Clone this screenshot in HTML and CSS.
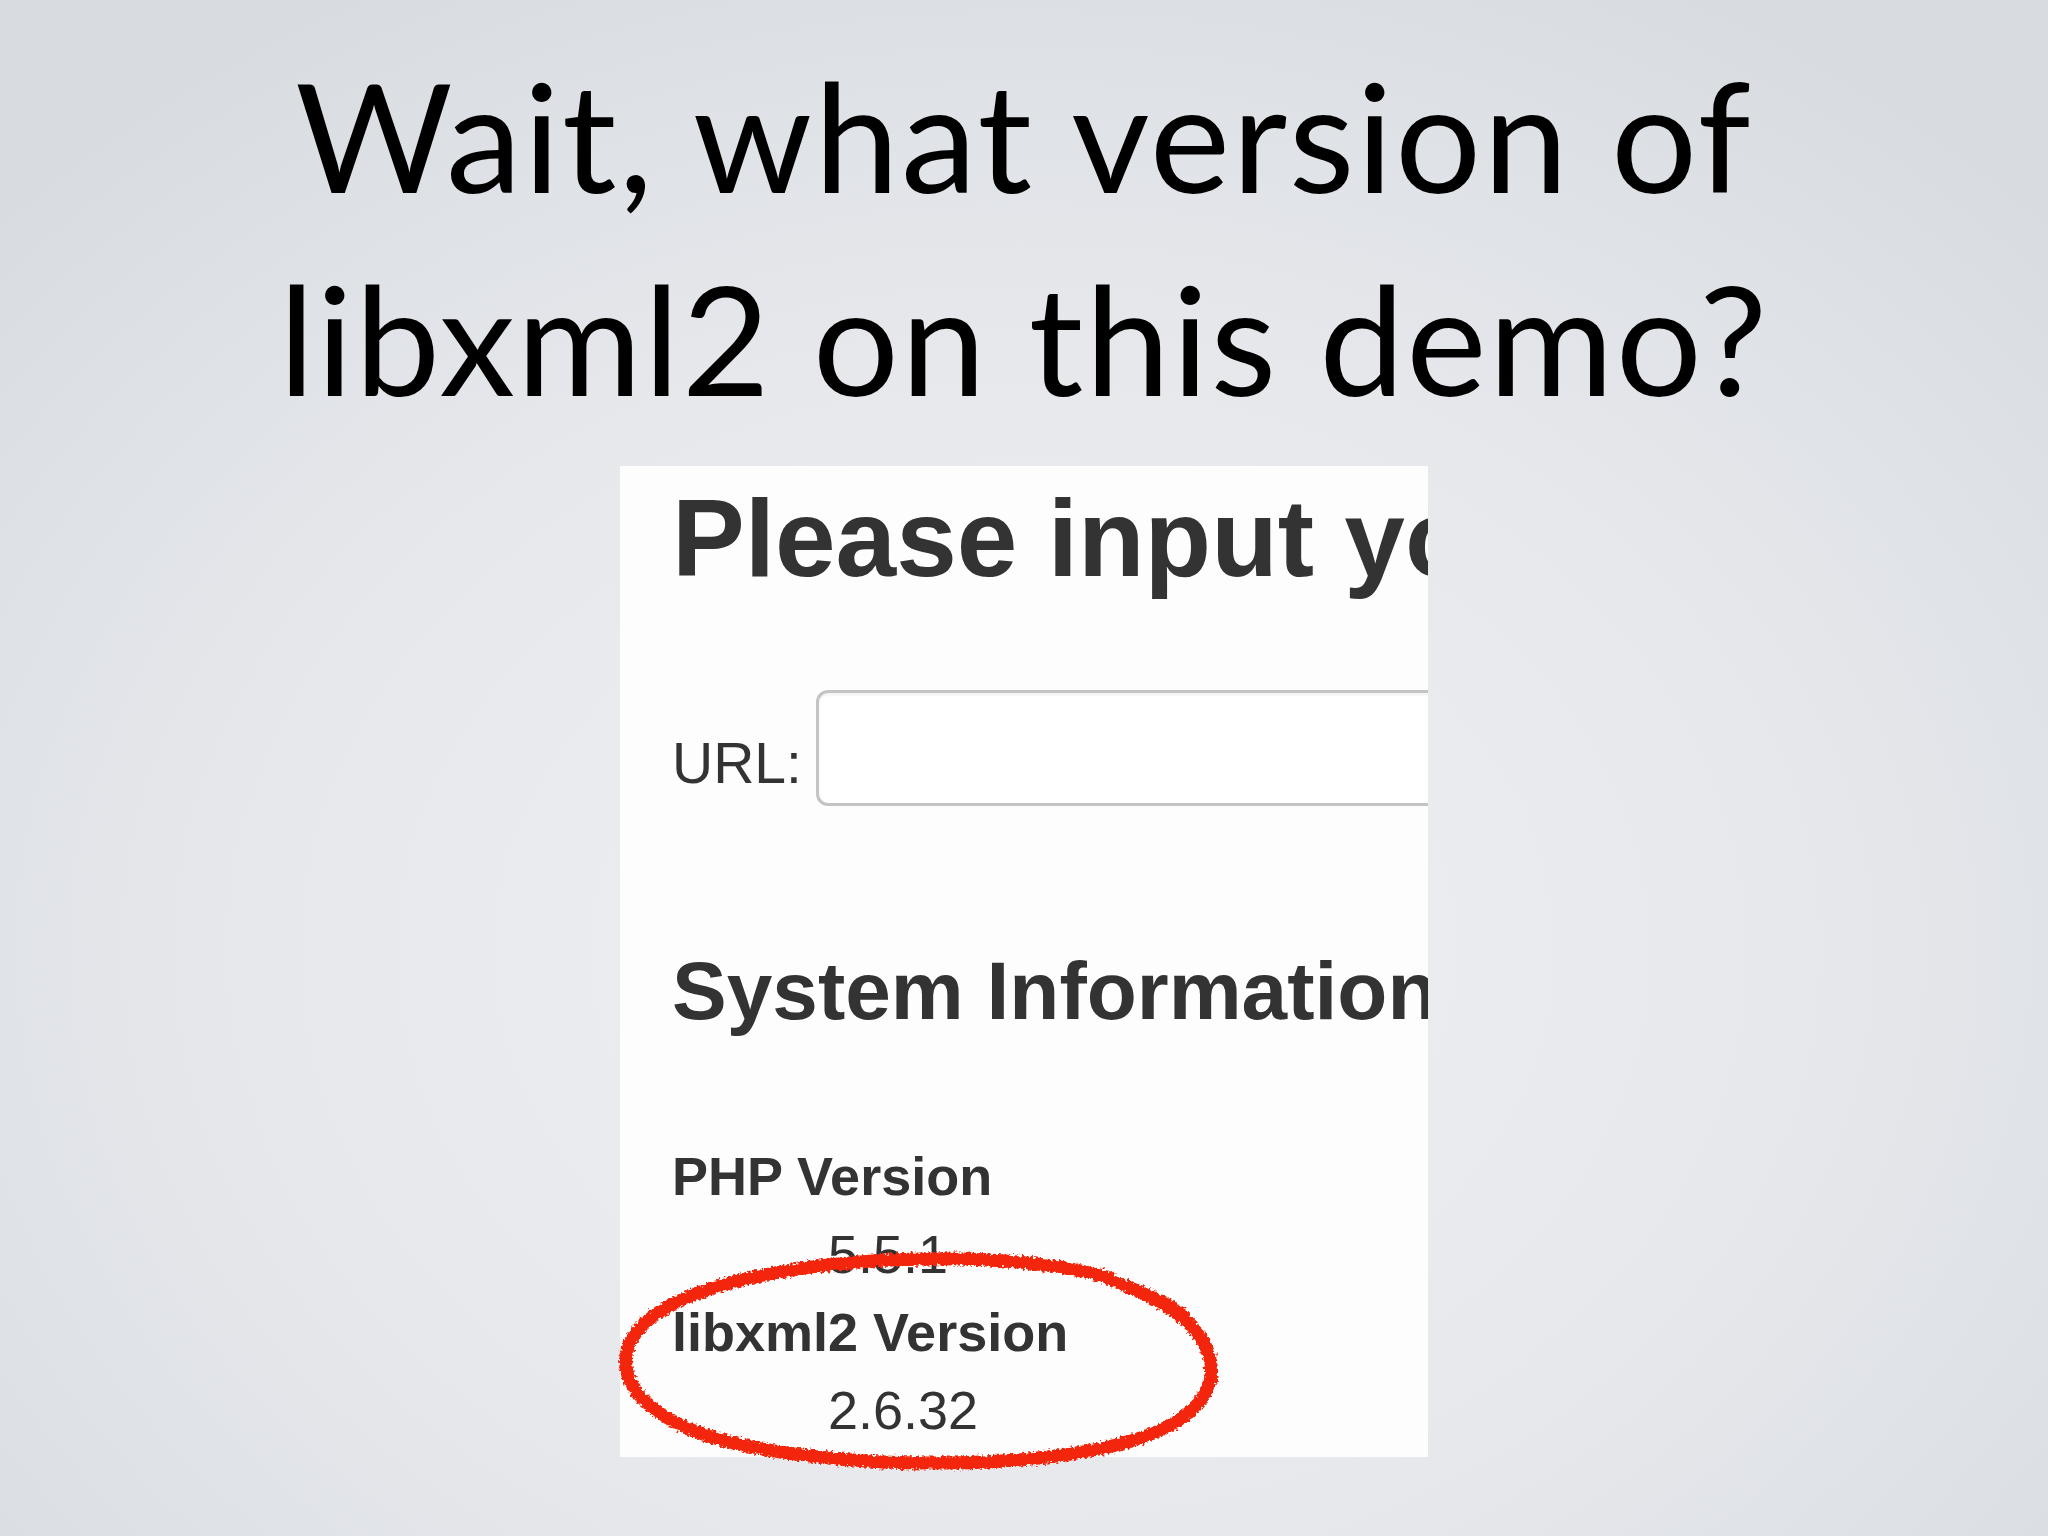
FILE: index.html
```html
<!DOCTYPE html>
<html lang="en">
<head>
<meta charset="utf-8">
<title>Wait, what version of libxml2 on this demo?</title>
<link rel="stylesheet" href="styles.css">
</head>
<body>
<main class="slide">
  <h1 class="slide-title">Wait, what version of<br>libxml2 on this demo?</h1>
  <div class="shot">
    <div class="page">
      <h2 class="page-h1">Please input your URL</h2>
      <form class="url-row">
        <label class="url-label" for="url">URL:</label>
        <input class="url-input" id="url" type="text">
      </form>
      <h3 class="page-h2">System Information</h3>
      <dl class="info">
        <dt>PHP Version</dt>
        <dd>5.5.1</dd>
        <dt>libxml2 Version</dt>
        <dd>2.6.32</dd>
      </dl>
    </div>
    <svg class="circle" width="640" height="240" viewBox="0 0 640 240" aria-hidden="true">
      <defs>
        <filter id="rough" x="-10%" y="-20%" width="120%" height="140%">
          <feTurbulence type="fractalNoise" baseFrequency="0.35" numOctaves="2" seed="4" result="noise"/>
          <feDisplacementMap in="SourceGraphic" in2="noise" scale="7" xChannelSelector="R" yChannelSelector="G"/>
        </filter>
      </defs>
      <g filter="url(#rough)" fill="none" stroke="#f3280c" stroke-linecap="round">
        <path d="M 520 48 C 610 80 640 150 560 190 C 470 235 230 235 110 200 C 10 170 -10 105 70 65 C 160 20 380 5 505 40" stroke-width="13"/>
        <path d="M 505 42 C 535 52 560 62 580 78" stroke-width="11"/>
      </g>
    </svg>
  </div>
</main>
</body>
</html>
```

FILE: styles.css
```css
* { box-sizing: border-box; }

html, body {
  margin: 0;
  padding: 0;
}

body {
  width: 2048px;
  height: 1536px;
  overflow: hidden;
  background: radial-gradient(ellipse 1400px 1100px at 50% 62%, #eef0f3 0%, #e6e8ec 55%, #d8dce1 100%);
}

.slide {
  display: flex;
  flex-direction: column;
  align-items: center;
  height: 1536px;
}

.slide-title {
  margin: 33px 0 27px;
  font-family: Lato, "Open Sans", sans-serif;
  font-weight: 400;
  font-size: 152px;
  line-height: 203px;
  letter-spacing: 2px;
  color: #000;
  text-align: center;
  white-space: nowrap;
}

.shot {
  position: relative;
  width: 808px;
  height: 991px;
}

.page {
  width: 808px;
  height: 991px;
  background: #fdfdfd;
  overflow: hidden;
  padding: 12px 0 0 52px;
  font-family: "Liberation Sans", Arial, sans-serif;
  color: #333;
  white-space: nowrap;
}

.page-h1 {
  margin: 0;
  font-size: 109px;
  font-weight: 700;
  line-height: 120px;
}

.url-row {
  display: flex;
  align-items: flex-end;
  margin: 92px 0 0;
}

.url-label {
  font-size: 57px;
  line-height: 57px;
  margin: 0 14px 14px 0;
}

.url-input {
  flex: 0 0 auto;
  width: 900px;
  height: 116px;
  border: 3px solid #c4c4c4;
  border-radius: 12px;
  background: #fff;
  box-shadow: inset 0 2px 3px rgba(0, 0, 0, 0.06);
  margin: 0;
  padding: 0;
}

.page-h2 {
  margin: 140px 0 0;
  font-size: 82px;
  font-weight: 700;
  line-height: 90px;
}

.info {
  margin: 101px 0 0;
  font-size: 54px;
  line-height: 78px;
}

.info dt {
  font-weight: 700;
}

.info dd {
  margin: 0 0 0 156px;
}

.circle {
  position: absolute;
  left: -15px;
  top: 772px;
  overflow: visible;
}
```
